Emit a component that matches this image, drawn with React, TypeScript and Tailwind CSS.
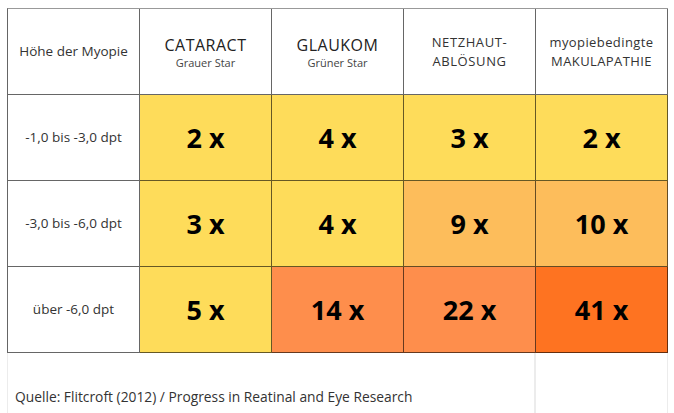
import React from "react";

const Y = "bg-[#fedc5a]";
const LO = "bg-[#fdbd5b]";
const O = "bg-[#fe8e4c]";
const DO = "bg-[#fe7321]";

const rows: { label: string; cells: [string, string][] }[] = [
  { label: "-1,0 bis -3,0 dpt", cells: [["2 x", Y], ["4 x", Y], ["3 x", Y], ["2 x", Y]] },
  { label: "-3,0 bis -6,0 dpt", cells: [["3 x", Y], ["4 x", Y], ["9 x", LO], ["10 x", LO]] },
  { label: "über -6,0 dpt", cells: [["5 x", Y], ["14 x", O], ["22 x", O], ["41 x", DO]] },
];

const cell = "border-r-[1.5px] border-b-[1.5px] border-[#00000099] flex flex-col items-center justify-center text-center";

export default function App() {
  return (
    <div className="w-[674px] h-[413px] bg-white overflow-hidden pt-[8px] pl-[7px]" style={{ fontFamily: '"Open Sans", "Noto Sans", sans-serif' }}>
      <div className="grid grid-cols-[repeat(5,132px)] w-[661px] border-l-[1.5px] border-t-[1.5px] border-t-[#00000066] border-l-[#00000099]">
        <div className={`${cell} h-[86px] text-[13.5px] text-[#333]`}>Höhe der Myopie</div>
        <div className={`${cell} h-[86px] text-[#222]`}>
          <div className="text-[16px] leading-[20px] tracking-[0.5px] mt-[1px]">CATARACT</div>
          <div className="text-[11px] leading-[15px] text-[#444]">Grauer Star</div>
        </div>
        <div className={`${cell} h-[86px] text-[#222]`}>
          <div className="text-[16px] leading-[20px] tracking-[0.5px] mt-[1px]">GLAUKOM</div>
          <div className="text-[11px] leading-[15px] text-[#444]">Grüner Star</div>
        </div>
        <div className={`${cell} h-[86px] text-[13px] leading-[19px] tracking-[0.6px] text-[#333]`}>
          <div>NETZHAUT-</div>
          <div>ABLÖSUNG</div>
        </div>
        <div className={`${cell} h-[86px] text-[13px] leading-[19px] tracking-[0.4px] text-[#333]`}>
          <div>myopiebedingte</div>
          <div>MAKULAPATHIE</div>
        </div>
        {rows.map((r) => (
          <React.Fragment key={r.label}>
            <div className={`${cell} h-[86px] text-[13.5px] text-[#333]`}>
              <span>{r.label}</span>
            </div>
            {r.cells.map(([v, bg], i) => (
              <div key={i} className={`${cell} ${bg} h-[86px] text-[27px] font-bold text-black`}>
                <span className="mt-[2px]">{v}</span>
              </div>
            ))}
          </React.Fragment>
        ))}
      </div>
      <div className="grid grid-cols-[528px_132px] w-[661px] h-[60px] border-l border-[#ececec]">
        <div className="border-r-2 border-[#ececec] relative">
          <div className="absolute left-[7px] top-[34px] text-[13.8px] text-[#333] whitespace-nowrap">
            Quelle: Flitcroft (2012) / Progress in Reatinal and Eye Research
          </div>
        </div>
        <div className="border-r border-[#ececec]" />
      </div>
    </div>
  );
}
